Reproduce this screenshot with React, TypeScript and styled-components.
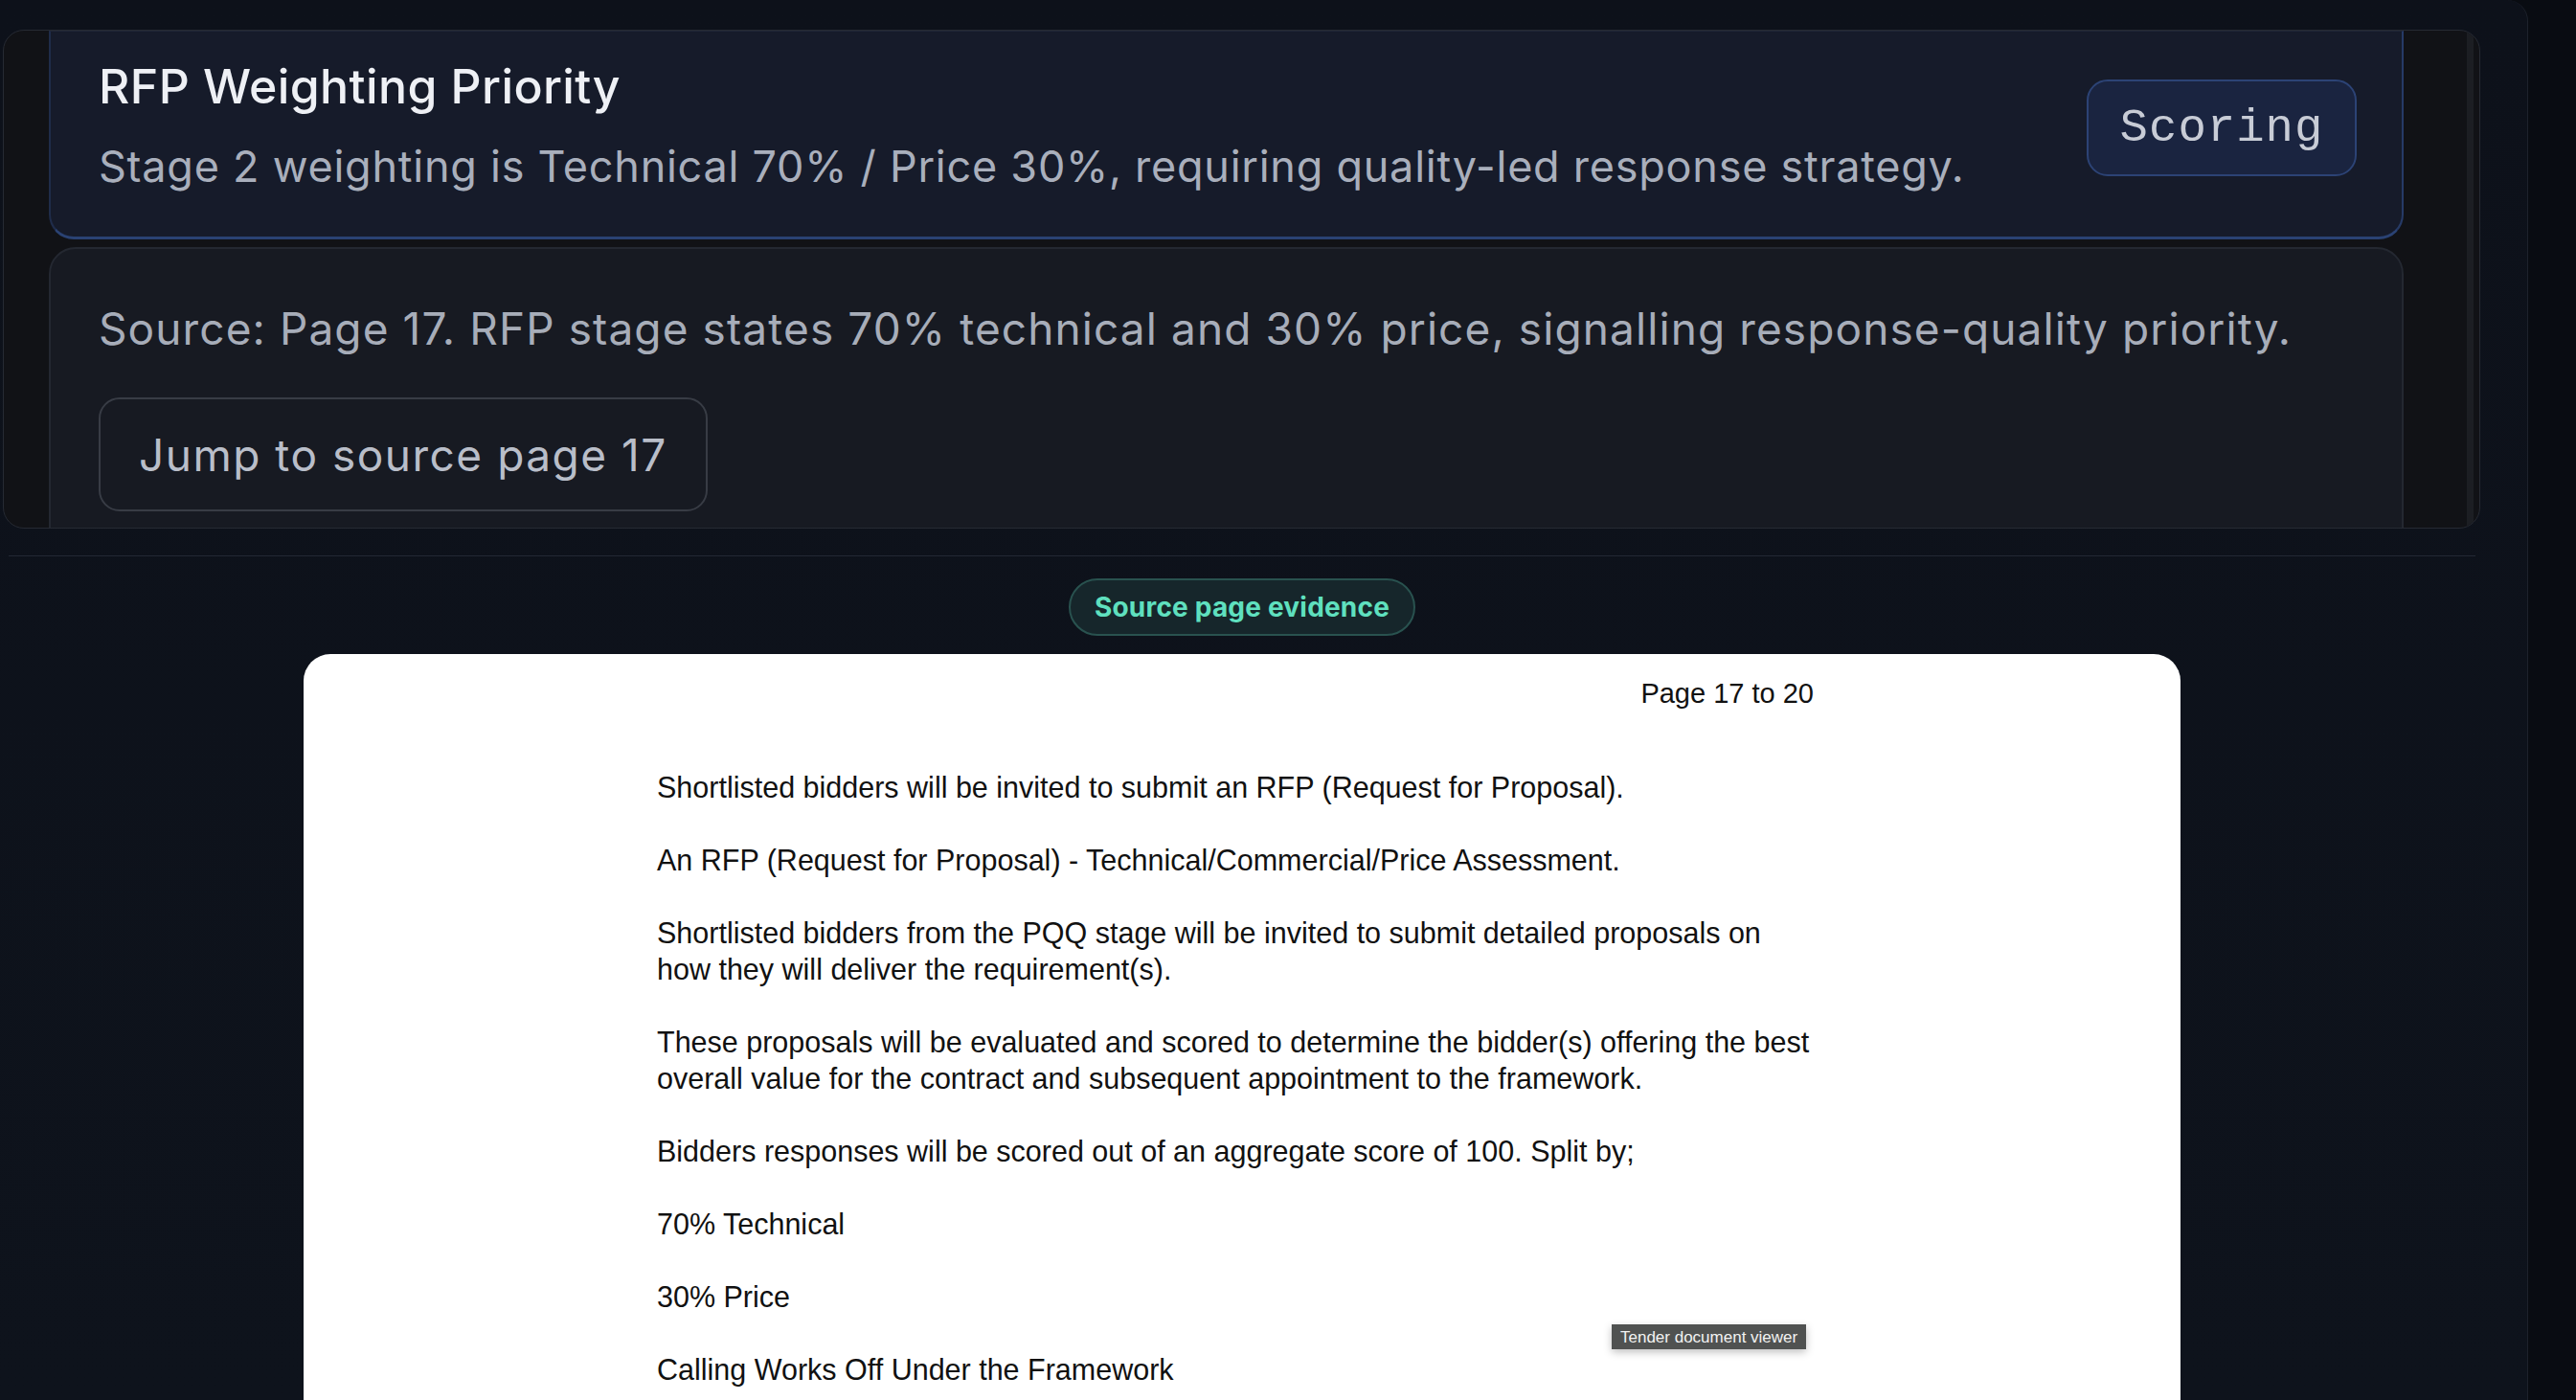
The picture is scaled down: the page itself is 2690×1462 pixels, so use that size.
import styled, { createGlobalStyle } from 'styled-components';

const GlobalStyle = createGlobalStyle`
  html, body {
    margin: 0;
    padding: 0;
    background: #090c12;
    font-family: Inter, 'Noto Sans', sans-serif;
  }
  * { box-sizing: border-box; }
`;

const Shell = styled.div`
  display: flex;
  height: 1462px;
  overflow: hidden;
  background: #090c12;
`;

const Panel = styled.div`
  width: 2640px;
  flex: none;
  display: flex;
  flex-direction: column;
  padding-top: 31px;
  background: linear-gradient(180deg, #0d111a 0%, #0e131c 100%);
  border-right: 1px solid #1d222c;
  border-top-right-radius: 22px;
`;

const CardsBox = styled.div`
  width: 2587px;
  height: 521px;
  margin-left: 3px;
  display: flex;
  overflow: hidden;
  background: #111216;
  border: 1px solid #262a33;
  border-radius: 22px;
`;

const CardStack = styled.div`
  width: 2459px;
  margin-left: 47px;
  display: flex;
  flex-direction: column;
  gap: 8px;
  flex: none;
`;

const ScrollTrack = styled.div`
  width: 7px;
  margin-left: 66px;
  background: #1c1e23;
  flex: none;
`;

const HighlightCard = styled.div`
  height: 218px;
  flex: none;
  display: flex;
  align-items: flex-start;
  justify-content: space-between;
  padding: 28px 47px 0 50px;
  background: #161b2a;
  border-top: 1px solid #1f2536;
  border-left: 2px solid #1f2c4a;
  border-right: 2px solid #263a66;
  border-bottom: 3px solid #2a4273;
  border-radius: 0 0 26px 26px;
`;

const TextCol = styled.div`
  display: flex;
  flex-direction: column;
`;

const Title = styled.div`
  font-size: 50px;
  line-height: 58px;
  font-weight: 500;
  color: #eef0f5;
  letter-spacing: 0.4px;
`;

const Summary = styled.div`
  margin-top: 27px;
  font-size: 45px;
  line-height: 56px;
  color: #a9afbc;
  letter-spacing: 0.75px;
`;

const Badge = styled.div`
  margin-top: 22px;
  width: 282px;
  height: 101px;
  display: flex;
  align-items: center;
  justify-content: center;
  background: #1a2440;
  border: 2px solid #2c4375;
  border-radius: 22px;
  font-family: 'Liberation Mono', 'DejaVu Sans Mono', monospace;
  font-size: 49px;
  letter-spacing: 1px;
  color: #c8ccd6;
`;

const SourceCard = styled.div`
  height: 300px;
  flex: none;
  padding: 55px 50px 0 50px;
  background: #171a22;
  border: 2px solid #242831;
  border-radius: 28px 28px 0 0;
`;

const SourceText = styled.div`
  font-size: 46px;
  line-height: 56px;
  color: #a7adb9;
  letter-spacing: 1.1px;
`;

const JumpButton = styled.button`
  margin-top: 44px;
  height: 119px;
  padding: 0 40px;
  display: flex;
  align-items: center;
  background: transparent;
  border: 2px solid #383c45;
  border-radius: 22px;
  font-family: Inter, 'Noto Sans', sans-serif;
  font-size: 46px;
  line-height: 56px;
  color: #b9bec9;
  letter-spacing: 1.5px;
`;

const Divider = styled.div`
  width: 2576px;
  height: 1px;
  margin: 28px 0 0 9px;
  background: #232833;
  flex: none;
`;

const Evidence = styled.div`
  width: 2594px;
  flex: 1;
  min-height: 0;
  display: flex;
  flex-direction: column;
  align-items: center;
  padding-top: 23px;
`;

const Pill = styled.div`
  height: 60px;
  padding: 0 25px;
  display: flex;
  align-items: center;
  background: #16262b;
  border: 2px solid #29524f;
  border-radius: 30px;
  font-size: 28px;
  font-weight: 700;
  color: #5fe0bf;
  letter-spacing: 0.2px;
`;

const Doc = styled.div`
  position: relative;
  width: 1960px;
  flex: 1;
  margin-top: 19px;
  padding: 22px 383px 0 369px;
  background: #ffffff;
  border-radius: 28px 28px 0 0;
  font-family: 'Liberation Sans', Arial, sans-serif;
  line-height: 38px;
  color: #111111;
`;

const PageLabel = styled.div`
  text-align: right;
  font-size: 29px;
`;

const DocBody = styled.div`
  margin-top: 60px;
  display: flex;
  flex-direction: column;
  gap: 38px;
  font-size: 30.5px;
`;

const Para = styled.p`
  margin: 0;
  white-space: nowrap;
`;

const Tip = styled.div`
  position: absolute;
  left: 1366px;
  top: 700px;
  height: 26px;
  padding: 0 9px;
  display: flex;
  align-items: center;
  background: #505251;
  color: #f2f2f2;
  font-size: 17px;
  line-height: 1;
  box-shadow: 0 3px 8px rgba(0, 0, 0, 0.25);
`;

const paragraphs = [
  ['Shortlisted bidders will be invited to submit an RFP (Request for Proposal).'],
  ['An RFP (Request for Proposal) - Technical/Commercial/Price Assessment.'],
  [
    'Shortlisted bidders from the PQQ stage will be invited to submit detailed proposals on',
    'how they will deliver the requirement(s).',
  ],
  [
    'These proposals will be evaluated and scored to determine the bidder(s) offering the best',
    'overall value for the contract and subsequent appointment to the framework.',
  ],
  ['Bidders responses will be scored out of an aggregate score of 100. Split by;'],
  ['70% Technical'],
  ['30% Price'],
  ['Calling Works Off Under the Framework'],
];

function App() {
  return (
    <Shell>
      <GlobalStyle />
      <Panel>
        <CardsBox>
          <CardStack>
            <HighlightCard>
              <TextCol>
                <Title>RFP Weighting Priority</Title>
                <Summary>
                  Stage 2 weighting is Technical 70% / Price 30%, requiring quality-led response strategy.
                </Summary>
              </TextCol>
              <Badge>Scoring</Badge>
            </HighlightCard>
            <SourceCard>
              <SourceText>
                Source: Page 17. RFP stage states 70% technical and 30% price, signalling response-quality priority.
              </SourceText>
              <JumpButton type='button'>Jump to source page 17</JumpButton>
            </SourceCard>
          </CardStack>
          <ScrollTrack />
        </CardsBox>
        <Divider />
        <Evidence>
          <Pill>Source page evidence</Pill>
          <Doc>
            <PageLabel>Page 17 to 20</PageLabel>
            <DocBody>
              {paragraphs.map((lines, i) => (
                <Para key={i}>
                  {lines.map((line, j) => (
                    <span key={j}>
                      {j > 0 && <br />}
                      {line}
                    </span>
                  ))}
                </Para>
              ))}
            </DocBody>
            <Tip>Tender document viewer</Tip>
          </Doc>
        </Evidence>
      </Panel>
    </Shell>
  );
}

export default App;
